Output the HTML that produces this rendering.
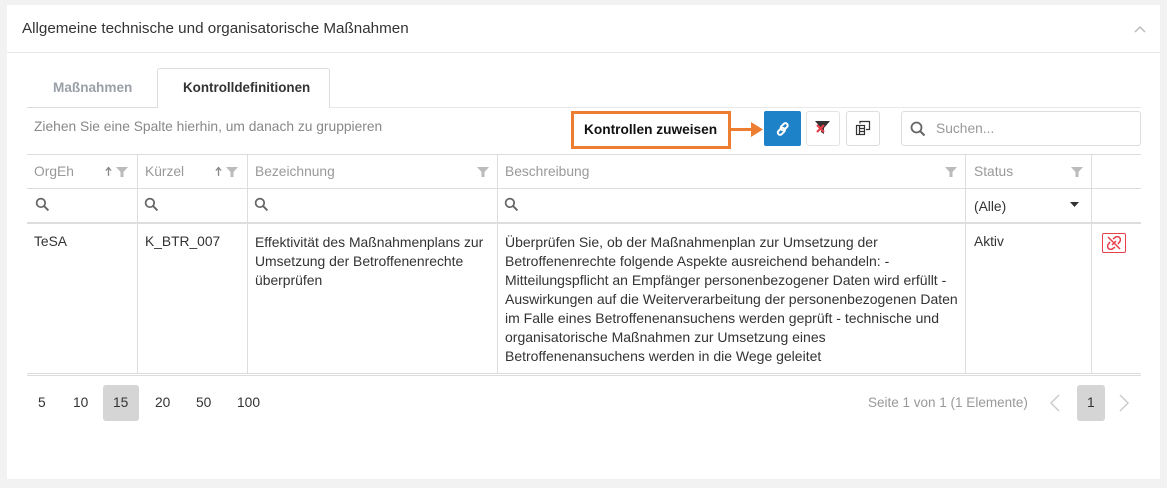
<!DOCTYPE html>
<html><head><meta charset="utf-8"><style>
*{box-sizing:border-box;margin:0;padding:0}
body{width:1167px;height:488px;background:#f2f2f2;font-family:"Liberation Sans",sans-serif;font-size:13.8px;color:#333;position:relative;overflow:hidden}
.a{position:absolute}
.card{left:7px;top:5px;width:1153px;height:474px;background:#fff}
.hl{background:#ddd}
.t{white-space:nowrap}
.gray{color:#999}
.vl{width:1px;background:#ddd}
</style></head><body>
<div class="a card"></div>
<div class="a t" style="left:22px;top:20px;font-size:15.2px;color:#333">Allgemeine technische und organisatorische Maßnahmen</div>
<svg class="a" style="left:1134px;top:25px" width="12" height="10"><path d="M1 7 L6 2 L11 7" stroke="#bbb" stroke-width="1.5" fill="none"/></svg>
<div class="a hl" style="left:7px;top:52px;width:1153px;height:1px;background:#e6e6e6"></div>
<!-- tabs -->
<div class="a t" style="left:53px;top:80px;font-weight:bold;color:#9aa0a8;font-size:13.6px">Maßnahmen</div>
<div class="a" style="left:157px;top:68px;width:173px;height:40px;border:1px solid #ddd;border-bottom:none;background:#fff;border-radius:3px 3px 0 0"></div>
<div class="a t" style="left:183px;top:80px;font-weight:bold;color:#333;font-size:13.4px">Kontrolldefinitionen</div>
<div class="a hl" style="left:27px;top:107px;width:130px;height:1px"></div>
<div class="a hl" style="left:330px;top:107px;width:811px;height:1px;background:#e8e8e8"></div>
<div class="a t" style="left:34px;top:119px;color:#888">Ziehen Sie eine Spalte hierhin, um danach zu gruppieren</div>
<!-- callout -->
<div class="a" style="left:571px;top:111px;width:160px;height:38px;border:3px solid #ed7d31;background:#fff"></div>
<div class="a t" style="left:584px;top:122px;font-weight:bold;color:#111;font-size:13.7px">Kontrollen zuweisen</div>
<div class="a" style="left:731px;top:128px;width:22px;height:3px;background:#ed7d31"></div>
<svg class="a" style="left:751px;top:122px" width="13" height="15"><path d="M0 0 L12 7.5 L0 15Z" fill="#ed7d31"/></svg>
<!-- buttons -->
<div class="a" style="left:764px;top:111px;width:37px;height:35px;background:#1e82c8;border-radius:2px"></div>
<svg class="a" style="left:775px;top:121px" width="16" height="16" viewBox="0 0 16 16"><g fill="none" stroke="#fff" stroke-width="2"><rect x="7" y="1.5" width="4.5" height="8" rx="2.2" transform="rotate(45 9 5.5)"/><rect x="4" y="6.5" width="4.5" height="8" rx="2.2" transform="rotate(45 6.5 10.5)"/></g></svg>
<div class="a" style="left:806px;top:111px;width:34px;height:35px;border:1px solid #e3e3e3;border-radius:3px"></div>
<svg class="a" style="left:814px;top:120px" width="18" height="16"><path d="M1 1 H16 L10 8 V14 L7 12 V8Z" fill="#333"/><path d="M3 5 L10 12 M10 5 L3 12" stroke="#e8404a" stroke-width="2.2"/></svg>
<div class="a" style="left:846px;top:111px;width:34px;height:35px;border:1px solid #ddd;border-radius:3px"></div>
<svg class="a" style="left:854px;top:120px" width="18" height="16"><g fill="none" stroke="#333" stroke-width="1.2"><path d="M6 3.5 V1.5 H15.5 V9.5 H12"/><rect x="2.5" y="5.5" width="8" height="9"/><path d="M5.5 5.5 V14.5 M5.5 8.5 H10.5 M5.5 11.5 H10.5"/></g></svg>
<!-- search -->
<div class="a" style="left:901px;top:111px;width:240px;height:35px;border:1px solid #ddd;border-radius:3px"></div>
<svg class="a" style="left:910px;top:121px" width="16" height="16"><circle cx="6.5" cy="6.5" r="5" stroke="#666" stroke-width="1.8" fill="none"/><path d="M10 10 L14.5 14.5" stroke="#666" stroke-width="2"/></svg>
<div class="a t" style="left:936px;top:121px;color:#999">Suchen...</div>
<!-- grid lines -->
<div class="a hl" style="left:27px;top:154px;width:1114px;height:1px"></div>
<div class="a hl" style="left:27px;top:188px;width:1114px;height:1px"></div>
<div class="a hl" style="left:27px;top:222px;width:1114px;height:2px"></div>
<div class="a hl" style="left:27px;top:373px;width:1114px;height:1px"></div>
<div class="a hl" style="left:27px;top:375px;width:1114px;height:1px"></div>
<div class="a vl" style="left:137px;top:154px;height:219px"></div>
<div class="a vl" style="left:247px;top:154px;height:219px"></div>
<div class="a vl" style="left:497px;top:154px;height:219px"></div>
<div class="a vl" style="left:965px;top:154px;height:219px"></div>
<div class="a vl" style="left:1091px;top:154px;height:219px"></div>
<!-- headers -->
<div class="a t gray" style="left:34px;top:164px">OrgEh</div>
<div class="a t gray" style="left:145px;top:164px">Kürzel</div>
<div class="a t gray" style="left:255px;top:164px">Bezeichnung</div>
<div class="a t gray" style="left:505px;top:164px">Beschreibung</div>
<div class="a t gray" style="left:974px;top:164px">Status</div>
<svg width="0" height="0"><defs><symbol id="f" viewBox="0 0 12 12"><path d="M0 1 H12 L7.5 6 V11 H4.5 V6Z" fill="#bbb"/></symbol><symbol id="s" viewBox="0 0 14 14"><circle cx="5.5" cy="5.5" r="4" stroke="#666" stroke-width="1.6" fill="none"/><path d="M8.5 8.5 L12.5 12.5" stroke="#666" stroke-width="1.8"/></symbol><symbol id="u" viewBox="0 0 8 12"><path d="M4 11 V2 M1 5 L4 1.5 L7 5" stroke="#888" stroke-width="1.5" fill="none"/></symbol></defs></svg>
<svg class="a" style="left:105px;top:166px" width="7" height="11"><use href="#u"/></svg>
<svg class="a" style="left:116px;top:166px" width="12" height="12"><use href="#f"/></svg>
<svg class="a" style="left:215px;top:166px" width="7" height="11"><use href="#u"/></svg>
<svg class="a" style="left:226px;top:166px" width="12" height="12"><use href="#f"/></svg>
<svg class="a" style="left:477px;top:166px" width="12" height="12"><use href="#f"/></svg>
<svg class="a" style="left:945px;top:166px" width="12" height="12"><use href="#f"/></svg>
<svg class="a" style="left:1071px;top:166px" width="12" height="12"><use href="#f"/></svg>
<svg class="a" style="left:35px;top:197px" width="15" height="15"><use href="#s"/></svg>
<svg class="a" style="left:144px;top:197px" width="15" height="15"><use href="#s"/></svg>
<svg class="a" style="left:254px;top:197px" width="15" height="15"><use href="#s"/></svg>
<svg class="a" style="left:504px;top:197px" width="15" height="15"><use href="#s"/></svg>
<div class="a t" style="left:974px;top:199px">(Alle)</div>
<svg class="a" style="left:1070px;top:202px" width="9" height="6"><path d="M0 0 H9 L4.5 5Z" fill="#333"/></svg>
<!-- row -->
<div class="a t" style="left:34px;top:234px">TeSA</div>
<div class="a t" style="left:145px;top:234px">K_BTR_007</div>
<div class="a t" style="left:255px;top:233px;line-height:19px;font-size:13.9px">Effektivität des Maßnahmenplans zur<br>Umsetzung der Betroffenenrechte<br>überprüfen</div>
<div class="a t" style="left:505px;top:233px;line-height:19px;font-size:14px">Überprüfen Sie, ob der Maßnahmenplan zur Umsetzung der<br>Betroffenenrechte folgende Aspekte ausreichend behandeln: -<br>Mitteilungspflicht an Empfänger personenbezogener Daten wird erfüllt -<br>Auswirkungen auf die Weiterverarbeitung der personenbezogenen Daten<br>im Falle eines Betroffenenansuchens werden geprüft - technische und<br>organisatorische Maßnahmen zur Umsetzung eines<br>Betroffenenansuchens werden in die Wege geleitet</div>
<div class="a t" style="left:974px;top:234px">Aktiv</div>
<div class="a" style="left:1102px;top:233px;width:24px;height:20px;border:1px solid #e8404a;border-radius:2px"></div>
<svg class="a" style="left:1107px;top:236px" width="14" height="14" viewBox="0 0 14 14"><g fill="none" stroke="#e8404a" stroke-width="1.5"><path d="M6 3 L8 1.5 A2.5 2.5 0 0 1 12.5 6 L11 8"/><path d="M8 11 L6 12.5 A2.5 2.5 0 0 1 1.5 8 L3 6"/><path d="M5 9 L9 5 M1 1 L13 13"/></g></svg>
<!-- pager -->
<div class="a" style="left:103px;top:385px;width:36px;height:36px;background:#d5d5d5;border-radius:3px"></div>
<div class="a t" style="left:38px;top:395px">5</div>
<div class="a t" style="left:73px;top:395px">10</div>
<div class="a t" style="left:113px;top:395px">15</div>
<div class="a t" style="left:155px;top:395px">20</div>
<div class="a t" style="left:196px;top:395px">50</div>
<div class="a t" style="left:237px;top:395px">100</div>
<div class="a t" style="left:868px;top:395px;color:#999;font-size:13.5px">Seite 1 von 1 (1 Elemente)</div>
<svg class="a" style="left:1049px;top:394px" width="12" height="18"><path d="M10 1 L2 9 L10 17" stroke="#ccc" stroke-width="1.5" fill="none"/></svg>
<div class="a" style="left:1077px;top:385px;width:28px;height:36px;background:#d5d5d5;border-radius:3px"></div>
<div class="a t" style="left:1087px;top:395px">1</div>
<svg class="a" style="left:1118px;top:394px" width="12" height="18"><path d="M2 1 L10 9 L2 17" stroke="#ccc" stroke-width="1.5" fill="none"/></svg>
</body></html>
